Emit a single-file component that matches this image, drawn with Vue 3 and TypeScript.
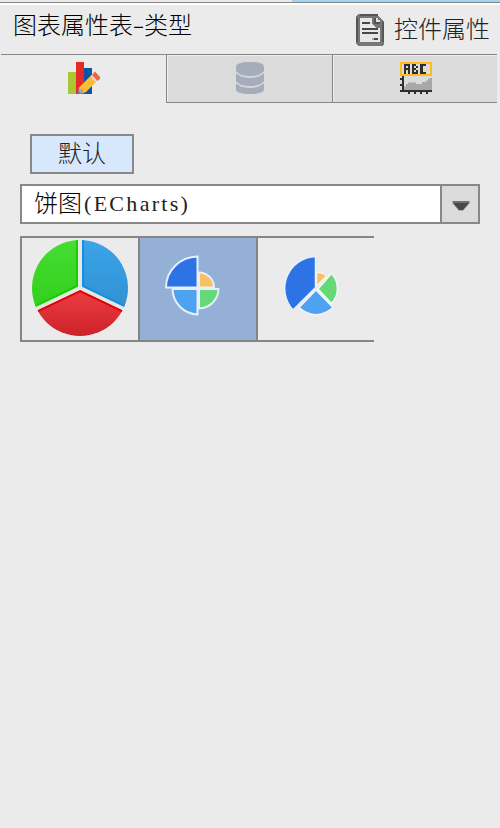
<script setup lang="ts">
import { ref } from 'vue'

interface PieSlice {
  d: string
  fill: string
  stroke: string
}

const selectedTab = ref(0)
const selectedStyle = ref(1)
const chartType = ref('饼图')
const chartLibrary = ref('(ECharts)')

const halo = '#e6effb'

const roseSlices: PieSlice[] = [
  { d: 'M57.500 49.500V18.500A32 31 0 0 0 26 49.500Z', fill: '#2d73e5', stroke: halo },
  { d: 'M59 49.500V34.500A15 15 0 0 1 74 49.500Z', fill: '#f7c162', stroke: halo },
  { d: 'M57.500 51V76.500A26 26 0 0 1 32.500 51Z', fill: '#4fa2f0', stroke: halo },
  { d: 'M59 51H78.500A19.500 20 0 0 1 59 70.500Z', fill: '#65d878', stroke: halo },
]

const splitSlices: PieSlice[] = [
  { d: 'M57.500 18.500V49.500L35 72A32 32 0 0 1 57.500 18.500Z', fill: '#2d73e5', stroke: '#e8f0fa' },
  { d: 'M58.500 34.500Q65 34 68.500 38L58.500 48Z', fill: '#f7c162', stroke: '#f5f3ec' },
  { d: 'M73.500 35.500A22 22 0 0 1 73.500 65.500L60 51Z', fill: '#65d878', stroke: '#f0faf1' },
  { d: 'M58 52L75 69.500Q58 84 41 69.500Z', fill: '#4fa2f0', stroke: '#f0f6fc' },
]
</script>

<template>
  <main class="panel">
    <div class="strip"><i></i></div>
    <header class="header">
      <h1>图表属性表<span class="dash">-</span>类型</h1>
      <div class="widget">
        <svg width="28" height="32" viewBox="0 0 14 16" shape-rendering="crispEdges">
          <path d="M1 0H10L14 4V15L13 16H1L0 15V1Z" fill="#777" />
          <path d="M2 2H8V5L10 7H12V14H2Z" fill="#e8e8e8" />
          <path d="M2 0H11V1H2ZM0 2H1V14H0ZM13 4H14V14H13ZM9 2H10V4H12V5H9Z" fill="#555" />
          <path d="M10 2H11V3H12V4H10Z" fill="#ddd" />
          <path d="M3 4H7V5H3ZM3 7H11V8H3ZM3 9H11V10H3ZM9 12H11V13H9Z" fill="#484848" />
          <path d="M8 12H9V13H8Z" fill="#aaa" />
        </svg>
        <span>控件属性</span>
      </div>
    </header>

    <nav class="tabs">
      <button class="tab" :class="{ active: selectedTab === 0 }" @click="selectedTab = 0">
        <svg width="32" height="32" viewBox="0 0 32 32">
          <path d="M0 10H8V32H0Z" fill="#a9c732" />
          <path d="M8 0H16V32H8Z" fill="#e52a2a" />
          <path d="M16 6H24V32H16Z" fill="#0855a3" />
          <path d="M11 25L17 31L10 32Z" fill="#aaa2ae" />
          <path d="M10 29L13 31.500L10 32Z" fill="#77778c" />
          <path d="M11.500 25L22 14.500L28 20L17.500 30.500L15 30L14 27.500L11.500 27Z" fill="#fbbd35" />
          <path d="M22 14.500L24 12.500L30 18L28 20Z" fill="#f4d5bd" />
          <path d="M24 13L27 9.500L32 15V17L29.500 19Z" fill="#ec6940" />
        </svg>
      </button>
      <button class="tab" :class="{ active: selectedTab === 1 }" @click="selectedTab = 1">
        <svg width="28" height="32" viewBox="0 0 28 32">
          <path d="M0 5Q0 0 14 0T28 5V27Q28 32 14 32T0 27Z" fill="#a5adba" />
          <path d="M0 10Q4 15 14 15T28 10M0 20Q4 25 14 25T28 20" fill="none" stroke="#d4d7dc" stroke-width="1.800" />
        </svg>
      </button>
      <button class="tab label-tab" :class="{ active: selectedTab === 2 }" @click="selectedTab = 2">
        <svg width="32" height="32" viewBox="0 0 32 32" shape-rendering="crispEdges">
          <path d="M1 1H31V13H1Z" fill="#dcdcdc" stroke="#ffbd18" stroke-width="2" />
          <path d="M4 2H10V12H8V8H6V12H4ZM6 4V6H8V4ZM12 2H16V4H18V6H16V8H18V12H12ZM14 4V6H16V4ZM14 8V10H16V8ZM20 2H26V4H23V10H26V12H20Z" fill="#302d2e" fill-rule="evenodd" />
          <path d="M4 26V24H6V22H8V20H16V22H22V20H26V18H28V16H32V28H4Z" fill="#a8a8a8" />
          <path d="M8 20H16V21H8ZM26 18H28V19H26ZM28 16H30V17H28ZM4 24H6V25H4Z" fill="#c3c3c3" />
          <path d="M2 14H4V28H32V30H28V32H26V30H22V32H20V30H16V32H14V30H10V32H8V30H0V28H2V24H0V22H2V18H0V16H2Z" fill="#302d2e" />
        </svg>
      </button>
    </nav>

    <section class="content">
      <button class="default">默认</button>
      <div class="select">
        <div class="value">{{ chartType }}<span>{{ chartLibrary }}</span></div>
        <div class="arrow">
          <svg width="18" height="10" viewBox="0 0 18 10">
            <path d="M0 0H18V2L11 10H7L0 2Z" fill="#aaa" />
            <path d="M1 0H17V2L11 9H7L1 2Z" fill="#484848" />
            <path d="M1 0H17V2H1Z" fill="#707070" />
          </svg>
        </div>
      </div>

      <div class="gallery">
        <button class="card" :class="{ selected: selectedStyle === 0 }" @click="selectedStyle = 0">
          <svg width="116" height="102" viewBox="0 0 116 102">
            <defs>
              <clipPath id="disc"><circle cx="58" cy="50" r="48" /></clipPath>
              <linearGradient id="green" x2="0" y2="1"><stop stop-color="#49df36" /><stop offset="1" stop-color="#2fce19" /></linearGradient>
              <linearGradient id="blue" x2="0" y2="1"><stop stop-color="#3ea7ed" /><stop offset="1" stop-color="#2d8fd0" /></linearGradient>
              <linearGradient id="red" x2="0" y2="1"><stop stop-color="#ec3d41" /><stop offset="1" stop-color="#c81e26" /></linearGradient>
            </defs>
            <g clip-path="url(#disc)" stroke-width="2">
              <path d="M55 -9V48L-9 79V-9Z" fill="url(#green)" stroke="#16cd02" />
              <path d="M61 -9V48L125 79V-9Z" fill="url(#blue)" stroke="#168ee0" />
              <path d="M58 53L125 85V105H-9V85Z" fill="url(#red)" stroke="#e4000b" />
              <path d="M58 0V50L5 75M58 50L111 75" fill="none" stroke="#e1e7e1" stroke-width="3" />
            </g>
          </svg>
        </button>
        <button class="card" :class="{ selected: selectedStyle === 1 }" @click="selectedStyle = 1">
          <svg width="116" height="102" viewBox="0 0 116 102">
            <path v-for="slice in roseSlices" :key="slice.d" :d="slice.d" :fill="slice.fill" :stroke="slice.stroke" stroke-width="2" />
          </svg>
        </button>
        <button class="card" :class="{ selected: selectedStyle === 2 }" @click="selectedStyle = 2">
          <svg width="116" height="102" viewBox="0 0 116 102">
            <path v-for="slice in splitSlices" :key="slice.d" :d="slice.d" :fill="slice.fill" :stroke="slice.stroke" stroke-width="1.500" />
          </svg>
        </button>
      </div>
    </section>
  </main>
</template>

<style>
body { margin: 0; background: #ebebeb; }
</style>

<style scoped>
* { box-sizing: border-box; }
button { padding: 0; margin: 0; border: 0; border-radius: 0; font: inherit; color: inherit; background: none; }
svg { display: block; flex: none; }
.panel { width: 500px; height: 828px; overflow: hidden; background: #ebebeb; color: #000; font-family: "Noto Sans CJK SC", sans-serif; font-weight: 300; font-size: 24px; }
.strip { height: 5px; border-bottom: 2px solid #fff; background: linear-gradient(#ebebeb 2px, #858585 2px, #858585 3px, #fff 3px); }
.strip i { display: block; width: 208px; height: 2px; margin-left: auto; background: #a4d4ef; }
.header { display: flex; justify-content: space-between; height: 49px; padding: 0 10px 0 13px; }
h1 { margin: 1px 0 0; font: inherit; line-height: 36px; white-space: nowrap; }
.dash { display: inline-block; width: 11px; text-align: center; transform: scaleX(1.5); }
.widget { display: flex; gap: 10px; padding-top: 9px; }
.widget span { line-height: 28px; color: #222; white-space: nowrap; }
.tabs { display: grid; grid-template-columns: 165px 166px 165px; height: 49px; margin: 0 3px 0 1px; border-top: 1px solid #858585; }
.tab { display: flex; justify-content: center; padding-top: 7px; border-left: 1px solid #858585; border-bottom: 1px solid #858585; background: #dbdbdb; box-shadow: inset 1px 1px #eee; }
.tab.active { border-color: transparent; background: #ebebeb; box-shadow: none; }
.label-tab { padding-left: 2px; }
.content { padding: 31px 20px 0; }
.default { display: block; width: 104px; height: 40px; margin-left: 10px; padding-bottom: 5px; border: 2px solid #888; background: #d8e8fc; line-height: 31px; color: #222; }
.select { display: flex; width: 460px; height: 40px; margin-top: 10px; border: 2px solid #888; background: #fff; }
.value { flex: 1; height: 36px; padding-left: 12px; line-height: 32px; white-space: nowrap; }
.value span { position: relative; top: -1px; margin-left: 2px; font-family: "Liberation Serif", serif; font-weight: 400; font-size: 22px; letter-spacing: 2.3px; color: #222; }
.arrow { display: flex; align-items: center; justify-content: center; width: 38px; border-left: 2px solid #888; background: #dbdbdb; padding: 3px 0 0 1px; }
.gallery { display: flex; width: 354px; height: 106px; margin-top: 12px; border: 2px solid #858585; border-right: 0; }
.card { flex: none; width: 118px; height: 102px; border-right: 2px solid #858585; }
.card:last-child { width: 116px; border-right: 0; }
.card.selected { background: #94b0d6; }
</style>
